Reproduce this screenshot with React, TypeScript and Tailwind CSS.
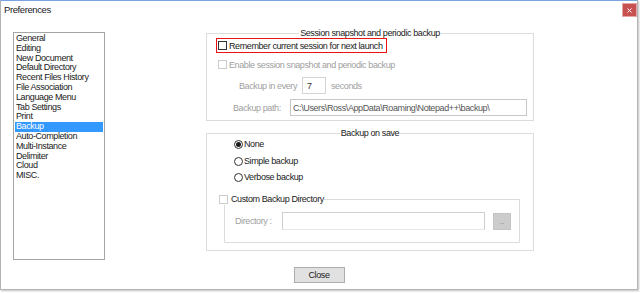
const pages = [
  'General',
  'Editing',
  'New Document',
  'Default Directory',
  'Recent Files History',
  'File Association',
  'Language Menu',
  'Tab Settings',
  'Print',
  'Backup',
  'Auto-Completion',
  'Multi-Instance',
  'Delimiter',
  'Cloud',
  'MISC.',
];

const CheckBox = ({ disabled }: { disabled?: boolean }) => (
  <span
    className={
      disabled
        ? 'w-[9px] h-[9px] shrink-0 border border-[#cccccc] bg-white'
        : 'w-[9px] h-[9px] shrink-0 border border-[#333333] bg-white'
    }
  />
);

const Radio = ({ label, checked }: { label: string; checked?: boolean }) => (
  <div className="flex items-center gap-[1px] h-[12px] ml-[27px]">
    <span className="w-[9px] h-[9px] rounded-full border border-[#333333] bg-white flex items-center justify-center">
      {checked && <span className="w-[5px] h-[5px] rounded-full bg-[#1a1a1a]" />}
    </span>
    <span>{label}</span>
  </div>
);

const App = () => {
  return (
    <div className="w-[640px] h-[293px] bg-white font-['Liberation_Sans',Arial,sans-serif] text-[9px] leading-[10px] tracking-[-0.4px] text-[#1a1a1a] whitespace-nowrap">
      <div className="w-[638px] h-[290px] flex flex-col border border-[#b4b4b4] border-t-[#79a4e0] shadow-[1px_1px_2px_rgba(0,0,0,0.25)]">
        {/* title bar */}
        <div className="h-[21px] flex justify-between">
          <span className="pl-[3px] pt-[3px] leading-[12px] text-[9.5px]">Preferences</span>
          <div className="mt-[2px] w-[15px] h-[14px] bg-[#c75050] border border-[#e6a6a6] flex items-center justify-center">
            <svg width="5" height="5" viewBox="0 0 5 5">
              <path d="M0.5 0.5 L4.5 4.5 M4.5 0.5 L0.5 4.5" stroke="#fff" strokeWidth="1" />
            </svg>
          </div>
        </div>

        <div className="flex pt-[6px]">
          {/* page list */}
          <div className="mt-[4px] ml-[12px] w-[92px] h-[228px] border border-[#a5a5a5] py-[1px] leading-[9.8px]">
            {pages.map((p) => (
              <div
                key={p}
                className={
                  p === 'Backup'
                    ? 'mx-[1px] pl-[1px] h-[9.8px] bg-[#3399ff] text-white'
                    : 'mx-[1px] pl-[1px] h-[9.8px]'
                }
              >
                {p}
              </div>
            ))}
          </div>

          <div className="ml-[101px] flex flex-col">
            {/* session snapshot */}
            <fieldset className="w-[328px] border border-[#dcdcdc] pb-[4px]">
              <legend className="mx-auto px-[1px] leading-[10px]">Session snapshot and periodic backup</legend>
              <div className="ml-[9px] w-[171px] h-[15px] border border-[#ee1111] flex items-center pl-[1px] gap-[2px]">
                <CheckBox />
                <span>Remember current session for next launch</span>
              </div>
              <div className="ml-[11px] mt-[5px] h-[13px] flex items-center gap-[2px] text-[#a0a0a0]">
                <CheckBox disabled />
                <span>Enable session snapshot and periodic backup</span>
              </div>
              <div className="ml-[32px] mt-[6px] flex items-center text-[#a0a0a0]">
                <span className="w-[63px]">Backup in every</span>
                <div className="w-[24px] h-[17px] border border-[#d4d4d4] pl-[4px] flex items-center text-[#333333]">7</div>
                <span className="ml-[5px]">seconds</span>
              </div>
              <div className="ml-[26px] mt-[5px] flex items-center text-[#a0a0a0]">
                <span className="w-[57px]">Backup path:</span>
                <div className="w-[237px] h-[17px] border border-[#c8c8c8] pl-[2px] flex items-center text-[#555555]">
                  C:\Users\Ross\AppData\Roaming\Notepad++\backup\
                </div>
              </div>
            </fieldset>

            {/* backup on save */}
            <fieldset className="mt-[7px] w-[328px] border border-[#dcdcdc] pb-[7px]">
              <legend className="mx-auto px-[1px] leading-[10px]">Backup on save</legend>
              <Radio label="None" checked />
              <div className="mt-[5px]">
                <Radio label="Simple backup" />
              </div>
              <div className="mt-[4px]">
                <Radio label="Verbose backup" />
              </div>
              <fieldset className="mt-[10px] ml-[17px] w-[296px] border border-[#dcdcdc] pb-[12px]">
                <legend className="ml-[-6px] flex items-center gap-[3px] h-[12px]">
                  <CheckBox disabled />
                  <span>Custom Backup Directory</span>
                </legend>
                <div className="mt-[7px] ml-[10px] flex items-center text-[#a0a0a0]">
                  <span className="w-[47px]">Directory :</span>
                  <div className="w-[203px] h-[18px] border border-[#cfcfcf] border-b-[#e6e6e6]" />
                  <div className="ml-[8px] mt-[1px] w-[18px] h-[17px] bg-[#cccccc] border border-[#c4c4c4] flex items-center justify-center text-[7px] leading-[7px] text-[#8a8a8a]">
                    ...
                  </div>
                </div>
              </fieldset>
            </fieldset>
          </div>
        </div>

        <div className="flex justify-center mt-[7px]">
          <button className="w-[51px] h-[16px] bg-[#e1e1e1] border border-[#adadad] text-[9px] leading-[10px] tracking-[-0.4px]">
            Close
          </button>
        </div>
      </div>
    </div>
  );
};

export default App;
